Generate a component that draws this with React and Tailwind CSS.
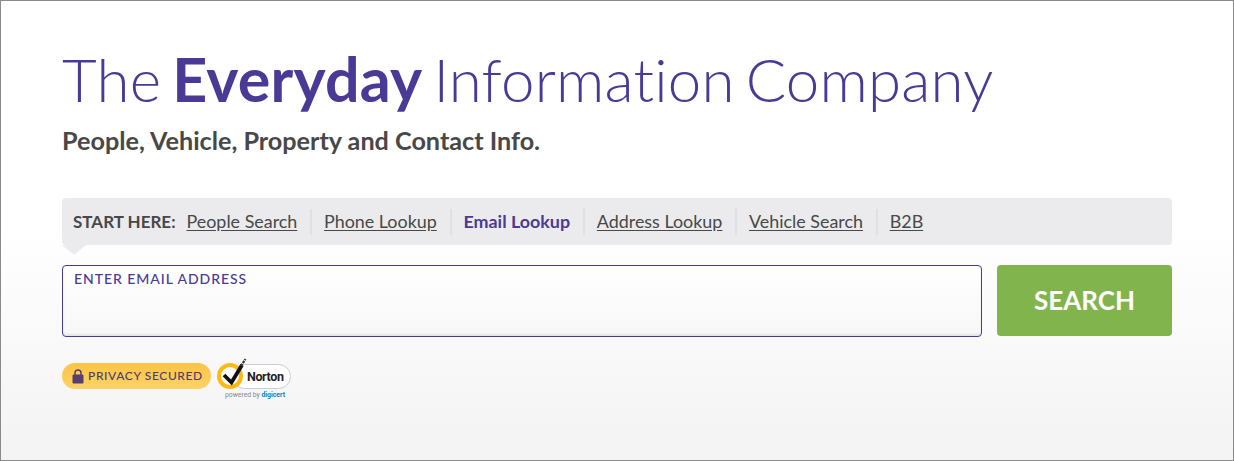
const links = [
  { label: 'People Search' },
  { label: 'Phone Lookup' },
  { label: 'Email Lookup', active: true },
  { label: 'Address Lookup' },
  { label: 'Vehicle Search' },
  { label: 'B2B', last: true },
];

const NortonBadge = () => (
  <div className="relative ml-[5px] h-[42px] w-[76px] shrink-0">
    <div className="absolute left-[16px] top-[6px] h-[25px] w-[59px] rounded-full border border-[#c9ced6] bg-white pl-[14px] text-[12.5px] font-bold leading-[23px] tracking-[-0.4px] text-[#222] font-['Roboto',sans-serif]">
      Norton
    </div>
    <svg className="absolute left-0 top-0" width="34" height="34" viewBox="0 0 34 34">
      <circle cx="14" cy="18" r="11" fill="#fff" stroke="#fdb913" strokeWidth="4" />
      <path d="M8 17 L15.5 24.5 L26 7" fill="none" stroke="#111" strokeWidth="3.8" />
      <path d="M25 8 L29.5 1" fill="none" stroke="#333" strokeWidth="2.2" strokeDasharray="2.5 1" />
    </svg>
    <div className="absolute left-[9px] top-[33px] whitespace-nowrap text-[6.8px] leading-[9px] text-[#888] font-['Roboto',sans-serif]">
      powered by <span className="font-bold text-[#0a7fc2]">digicert</span>
    </div>
  </div>
);

export default function App() {
  return (
    <div className="h-[461px] w-[1234px] overflow-hidden border border-[#8a8a8a] bg-gradient-to-b from-white from-50% to-[#f3f3f3] pl-[61px] pr-[61px] pt-[40px] font-['Lato',sans-serif] [font-variant-ligatures:none]">
      <h1 className="text-[60px] font-light leading-[76px] tracking-[0.2px] text-[#4a3a96] whitespace-nowrap [word-spacing:-5.5px]">
        The <span className="text-[61px] font-bold">Everyday</span> Information Company
      </h1>
      <p className="mt-[8px] text-[25.2px] font-bold leading-[30px] text-[#484848]">
        People, Vehicle, Property and Contact Info.
      </p>

      <div className="relative mt-[43px] flex h-[47px] items-center rounded-[4px] bg-[#ebebed] pl-[11px] text-[17.9px] text-[#484848]">
        <span className="mr-[11px] text-[17px] font-bold">START HERE:</span>
        {links.map((link) => (
          <div
            key={link.label}
            className={`flex h-[26px] items-center pr-[13px] mr-[11.7px] ${link.last ? '' : 'border-r-2 border-[#e0e0e2]'}`}
          >
            <a className={link.active ? 'font-bold text-[#4a3a96]' : 'underline underline-offset-2'}>{link.label}</a>
          </div>
        ))}
        <div className="absolute left-0 top-full h-0 w-0 border-x-[12px] border-t-[10px] border-x-transparent border-t-[#ebebed]" />
      </div>

      <div className="mt-[20px] flex items-start gap-[15px]">
        <div className="h-[72px] w-[920px] rounded-[4px] border border-[#4a3a96] bg-gradient-to-b from-white to-[#f7f7f7] px-[11px] pt-[4px] text-[14px] font-medium leading-[17px] tracking-[0.95px] text-[#4a3a96] shadow-[inset_0_-2px_2px_rgba(0,0,0,0.08)]">
          ENTER EMAIL ADDRESS
        </div>
        <button className="flex h-[71px] w-[175px] items-center justify-center rounded-[4px] bg-[#82b44e] text-[26px] font-bold text-white">
          SEARCH
        </button>
      </div>

      <div className="mt-[21px] flex items-start">
        <div className="mt-[5px] flex h-[26px] w-[149px] items-center rounded-full bg-gradient-to-b from-[#fcc344] to-[#fdd268] pl-[10px] text-[12px] font-medium tracking-[0.62px] text-[#4c4168]">
          <svg width="12" height="15" viewBox="0 0 12 15" className="mr-[4px] shrink-0">
            <path d="M3 7 V4 a3 3 0 0 1 6 0 V7" fill="none" stroke="#55406f" strokeWidth="1.5" />
            <rect x="0.5" y="5.5" width="11" height="9" rx="1.2" fill="#55406f" />
          </svg>
          PRIVACY SECURED
        </div>
        <NortonBadge />
      </div>
    </div>
  );
}
